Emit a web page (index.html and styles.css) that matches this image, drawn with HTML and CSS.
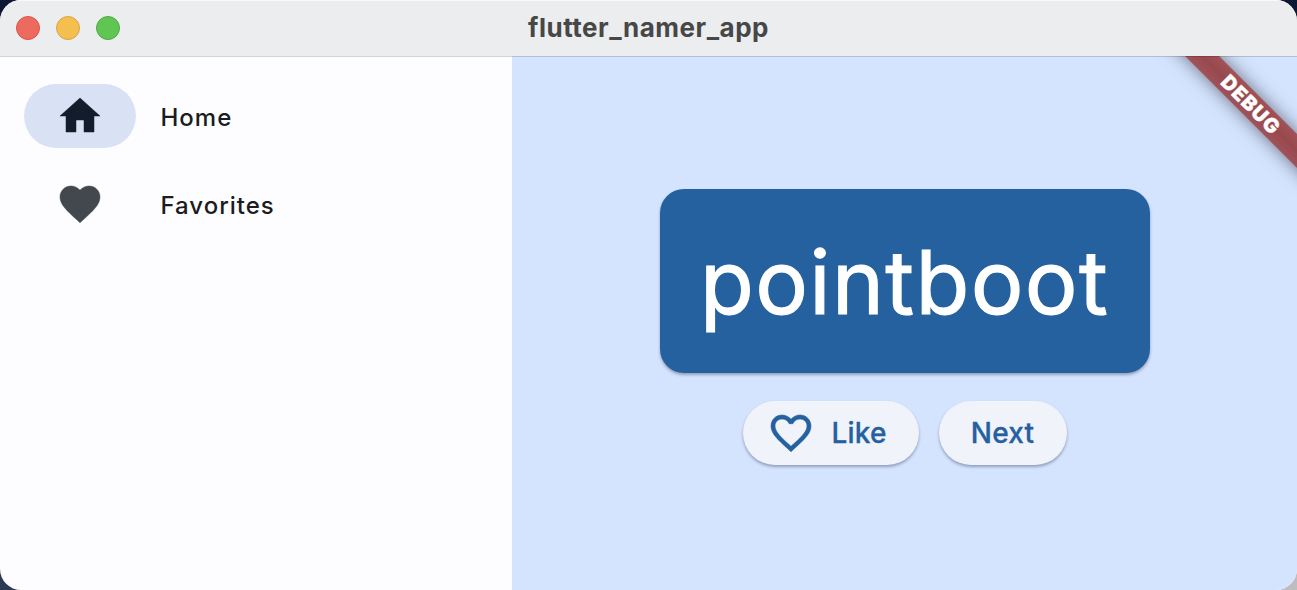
FILE: index.html
```html
<!DOCTYPE html>
<html lang="en">
<head>
<meta charset="utf-8">
<title>flutter_namer_app</title>
<link rel="stylesheet" href="styles.css">
</head>
<body>
<div class="window">
  <header class="titlebar">
    <div class="lights"><span class="light close"></span><span class="light minimize"></span><span class="light zoom"></span></div>
    <h1 class="title">flutter_namer_app</h1>
  </header>
  <main class="content">
    <nav class="rail">
      <a class="destination selected">
        <span class="indicator"><svg class="icon home" viewBox="0 0 24 24"><path d="M10 20v-6h4v6h5v-8h3L12 3 2 12h3v8z"/></svg></span>
        <span class="label">Home</span>
      </a>
      <a class="destination">
        <span class="indicator"><svg class="icon" viewBox="0 0 24 24"><path d="M12 21.35l-1.45-1.32C5.4 15.36 2 12.28 2 8.5 2 5.42 4.42 3 7.5 3c1.74 0 3.41.81 4.5 2.09C13.09 3.81 14.76 3 16.5 3 19.58 3 22 5.42 22 8.5c0 3.78-3.4 6.86-8.55 11.54L12 21.35z"/></svg></span>
        <span class="label">Favorites</span>
      </a>
    </nav>
    <section class="page">
      <div class="card"><span class="word">pointboot</span></div>
      <div class="actions">
        <button class="button like"><svg class="heart" viewBox="0 0 24 24"><path d="M16.5 3c-1.74 0-3.41.81-4.5 2.09C10.91 3.81 9.24 3 7.5 3 4.42 3 2 5.42 2 8.5c0 3.78 3.4 6.86 8.55 11.54L12 21.35l1.45-1.32C18.6 15.36 22 12.28 22 8.5 22 5.42 19.58 3 16.5 3zm-4.4 15.55l-.1.1-.1-.1C7.14 14.24 4 11.39 4 8.5 4 6.5 5.5 5 7.5 5c1.54 0 3.04.99 3.57 2.36h1.87C13.46 5.99 14.96 5 16.5 5c2 0 3.5 1.5 3.5 3.5 0 2.89-3.14 5.74-7.9 10.05z"/></svg><span>Like</span></button>
        <button class="button next"><span>Next</span></button>
      </div>
      <div class="banner"><span>DEBUG</span></div>
    </section>
  </main>
</div>
</body>
</html>
```
FILE: styles.css
```css
* { box-sizing: border-box; }
body {
  margin: 0;
  height: 590px;
  overflow: hidden;
  background:
    linear-gradient(#bdbdc0, #bdbdc0) right bottom / 40px 40px no-repeat,
    linear-gradient(#2c3b54, #2c3b54) left bottom / 40px 40px no-repeat,
    #0d1833;
  font-family: Inter, "Liberation Sans", sans-serif;
}
.window {
  display: flex;
  flex-direction: column;
  height: 590px;
  border-radius: 21px;
  overflow: hidden;
  background: #fdfcff;
}
.titlebar {
  position: relative;
  z-index: 1;
  display: grid;
  grid-template-columns: 1fr auto 1fr;
  align-items: center;
  height: 56px;
  flex: none;
  padding: 0 16px;
  background: #ecedef;
  box-shadow: inset 0 1px #f9f9fa, 0 1px rgba(0, 0, 0, .16);
}
.lights { display: flex; gap: 16px; }
.light { width: 24px; height: 24px; border-radius: 50%; border: 1px solid; }
.close { background: #ed6a5e; border-color: #d6564b; }
.minimize { background: #f5bf4f; border-color: #d8a443; }
.zoom { background: #61c554; border-color: #4fab43; }
.title {
  margin: 0;
  padding-bottom: 1px;
  font-size: 26px;
  line-height: 32px;
  font-weight: 700;
  letter-spacing: .52px;
  color: #474747;
}
.content { display: flex; flex: 1; min-height: 0; }
.rail {
  display: flex;
  flex-direction: column;
  gap: 24px;
  width: 512px;
  padding: 28px 24px;
}
.destination { display: flex; align-items: center; gap: 25px; height: 64px; color: #43474e; }
.indicator {
  display: flex;
  align-items: center;
  justify-content: center;
  width: 112px;
  height: 64px;
  border-radius: 32px;
}
.selected .indicator { background: #d9e2f5; color: #131c2b; }
.icon { width: 48px; height: 48px; fill: currentColor; stroke: currentColor; stroke-width: .25; }
.home { margin-bottom: 1px; }
.label {
  margin-left: -.5px;
  padding-top: 3px;
  font-size: 24px;
  line-height: 32px;
  font-weight: 500;
  letter-spacing: 1px;
  color: #1a1c1e;
}
.page {
  position: relative;
  display: flex;
  flex: 1;
  flex-direction: column;
  align-items: center;
  gap: 28px;
  padding-top: 133px;
  overflow: hidden;
  background: #d4e3fe;
}
.card {
  display: flex;
  align-items: center;
  justify-content: center;
  width: 490px;
  height: 184px;
  border-radius: 24px;
  background: #25609f;
  box-shadow: 0 2px 3px rgba(20, 35, 65, .35);
}
.word {
  padding-top: 1px;
  font-size: 88px;
  line-height: 104px;
  letter-spacing: 1.35px;
  -webkit-text-stroke: 1.1px #fff;
  color: #fff;
}
.actions { display: flex; gap: 20px; }
.button {
  display: flex;
  align-items: center;
  height: 64px;
  padding: 0;
  border: 0;
  border-radius: 32px;
  background: #f0f4fa;
  box-shadow: 0 2px 3px rgba(20, 35, 65, .35);
  font: 500 28px/40px Inter, "Liberation Sans", sans-serif;
  letter-spacing: .2px;
  -webkit-text-stroke: .3px #25609f;
  color: #25609f;
}
.like { width: 176px; padding-left: 24px; gap: 17px; }
.next { width: 128px; justify-content: center; }
.heart { width: 48px; height: 48px; fill: currentColor; stroke: currentColor; stroke-width: .3; }
.banner {
  position: absolute;
  left: 637.5px;
  top: 36px;
  width: 200px;
  height: 24px;
  padding-left: 2px;
  text-align: center;
  transform: rotate(45deg);
  background: linear-gradient(#a2525a, #96494d 50%, #a2525a);
  box-shadow: 0 0 18px rgba(0, 0, 0, .5);
  font-size: 20px;
  line-height: 24px;
  font-weight: 900;
  letter-spacing: 1px;
  -webkit-text-stroke: .3px #fff;
  color: #fff;
}
```
